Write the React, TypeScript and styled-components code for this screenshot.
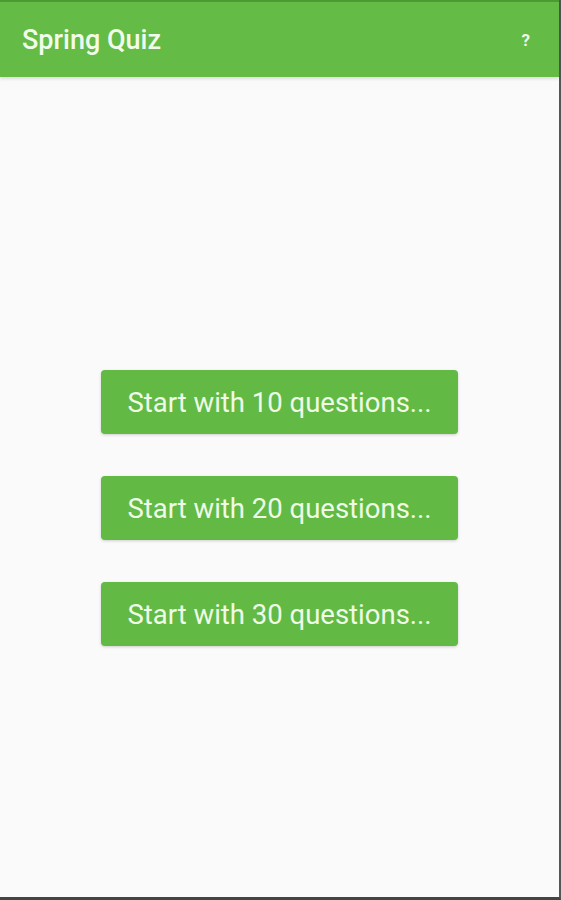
import styled, { createGlobalStyle } from "styled-components";

const GlobalStyles = createGlobalStyle`
  html, body {
    margin: 0;
    padding: 0;
    background: #fafafa;
  }
  body {
    font-family: Roboto, "Noto Sans", sans-serif;
  }
`;

const Frame = styled.div`
  box-sizing: border-box;
  width: 561px;
  height: 900px;
  display: flex;
  flex-direction: column;
  background: #fafafa;
  border-right: 2px solid #555;
  border-bottom: 3px solid #444;
`;

const AppBar = styled.header`
  box-sizing: border-box;
  height: 77px;
  flex-shrink: 0;
  display: flex;
  align-items: center;
  justify-content: space-between;
  padding: 0 29px 0 22px;
  background: #64bb45;
  border-top: 2px solid #4b9a32;
  box-shadow: 0 2px 3px rgba(0, 0, 0, 0.12);
`;

const Title = styled.h1`
  margin: 0;
  font-size: 27px;
  font-weight: 500;
  color: #f1fbeb;
`;

const HelpButton = styled.button`
  border: none;
  background: none;
  padding: 0;
  font-family: inherit;
  font-size: 17px;
  font-weight: 700;
  color: #eef9e6;
  cursor: pointer;
`;

const Content = styled.main`
  flex: 1;
  display: flex;
  flex-direction: column;
  align-items: center;
  gap: 42px;
  padding-top: 293px;
`;

const StartButton = styled.button`
  width: 357px;
  height: 64px;
  border: none;
  border-radius: 4px;
  background: #62b944;
  box-shadow: 0 1px 3px rgba(0, 0, 0, 0.18);
  font-family: Roboto, "Noto Sans", sans-serif;
  font-size: 27.5px;
  color: #eefbe6;
  cursor: pointer;
`;

const counts = [10, 20, 30];

export default function App() {
  return (
    <>
      <GlobalStyles />
      <Frame>
        <AppBar>
          <Title>Spring Quiz</Title>
          <HelpButton>?</HelpButton>
        </AppBar>
        <Content>
          {counts.map((n) => (
            <StartButton key={n}>Start with {n} questions...</StartButton>
          ))}
        </Content>
      </Frame>
    </>
  );
}
